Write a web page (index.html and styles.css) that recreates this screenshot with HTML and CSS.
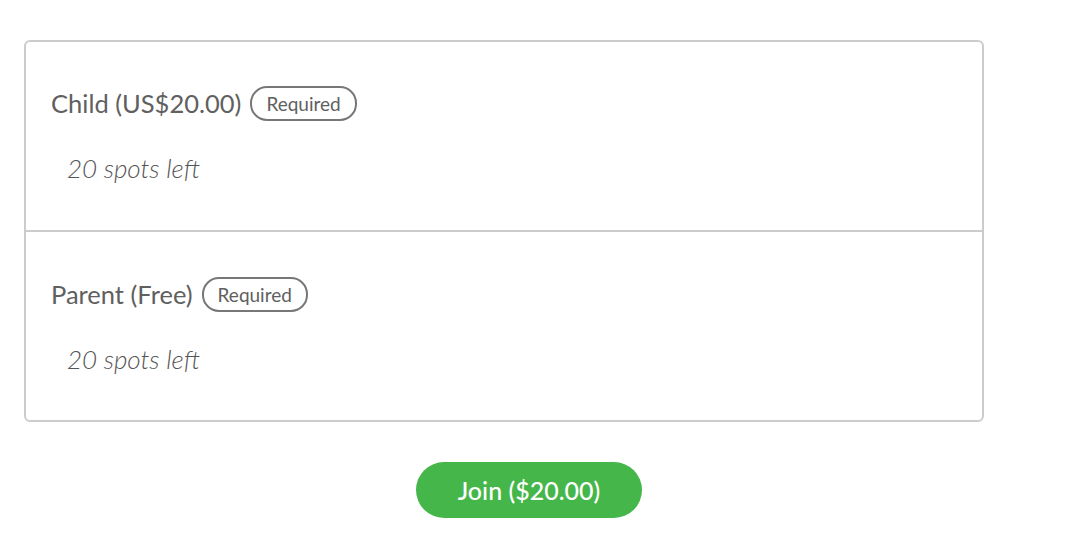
FILE: index.html
```html
<!DOCTYPE html>
<html>
<head>
<meta charset="utf-8">
<link rel="stylesheet" href="styles.css">
</head>
<body>
<div class="page">
  <div class="card">
    <div class="ticket">
      <div class="ticket-head">
        <span class="ticket-name">Child (US$20.00)</span>
        <span class="badge">Required</span>
      </div>
      <div class="spots">20 spots left</div>
    </div>
    <div class="ticket">
      <div class="ticket-head">
        <span class="ticket-name">Parent (Free)</span>
        <span class="badge">Required</span>
      </div>
      <div class="spots">20 spots left</div>
    </div>
  </div>
  <div class="actions">
    <button class="join">Join ($20.00)</button>
  </div>
</div>
</body>
</html>
```

FILE: styles.css
```css
html, body {
  margin: 0;
  padding: 0;
  background: #fff;
}
body {
  font-family: Lato, "Open Sans", sans-serif;
  color: #666;
}
.page {
  padding: 40px 0 0 0;
  width: 1058px;
}
.card {
  margin-left: 24px;
  width: 956px;
  border: 2px solid #cccccc;
  border-radius: 6px;
}
.ticket {
  height: 188px;
  box-sizing: border-box;
  padding: 42px 0 0 25px;
}
.ticket + .ticket {
  border-top: 2px solid #cccccc;
  height: 190px;
  padding-top: 43px;
}
.ticket-head {
  display: flex;
  align-items: center;
  gap: 9px;
  height: 38px;
}
.ticket-name {
  font-size: 25.5px;
  color: #606060;
}
.badge {
  font-size: 19px;
  color: #606060;
  border: 2px solid #777;
  border-radius: 17px;
  height: 35px;
  box-sizing: border-box;
  padding: 0 14px;
  display: flex;
  align-items: center;
}
.spots {
  margin: 30px 0 0 16px;
  font-size: 26px;
  font-style: italic;
  font-weight: 300;
  color: #555;
}
.actions {
  display: flex;
  justify-content: center;
  margin-top: 40px;
}
.join {
  font-family: Lato, sans-serif;
  font-size: 25px;
  font-weight: 500;
  color: #fff;
  background: #45b649;
  border: none;
  border-radius: 28px;
  width: 226px;
  height: 56px;
  padding: 0;
}
```
